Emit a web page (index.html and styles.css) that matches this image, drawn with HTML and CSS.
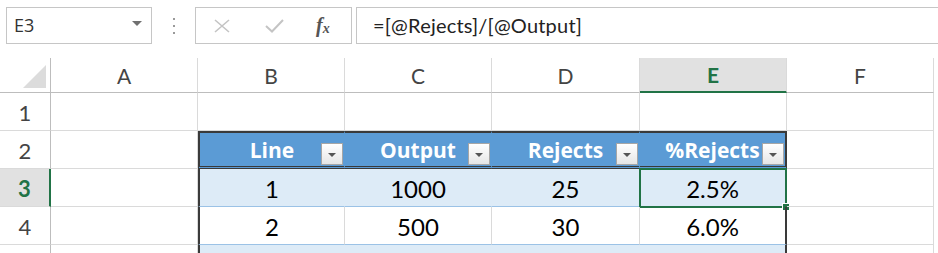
FILE: index.html
```html
<!DOCTYPE html>
<html lang="en">

<head>
    <meta charset="UTF-8">
    <title>Rejects</title>
    <link rel="stylesheet" href="styles.css">
</head>

<body>
    <div class="formula-bar">
        <div class="name-box">
            <span>E3</span>
            <span class="name-arrow"></span>
        </div>
        <div class="dots"><i></i><i></i><i></i></div>
        <div class="fx-box">
            <svg width="18" height="14" viewBox="0 0 18 14"><path d="M2 1 L16 13 M16 1 L2 13" stroke="#c4c4c4" stroke-width="1.6" fill="none"/></svg>
            <svg width="19" height="14" viewBox="0 0 19 14"><path d="M1 7 L7 12.5 L18 1" stroke="#c4c4c4" stroke-width="2" fill="none"/></svg>
            <span class="fx">f<sub>x</sub></span>
        </div>
        <div class="formula-input">=[@Rejects]/[@Output]</div>
    </div>

    <div class="sheet">
        <!-- column headers -->
        <div class="cell corner"><span class="corner-tri"></span></div>
        <div class="cell col-head">A</div>
        <div class="cell col-head">B</div>
        <div class="cell col-head">C</div>
        <div class="cell col-head">D</div>
        <div class="cell col-head active">E</div>
        <div class="cell col-head">F</div>

        <!-- row 1 -->
        <div class="cell row-head">1</div>
        <div class="cell"></div>
        <div class="cell"></div>
        <div class="cell"></div>
        <div class="cell"></div>
        <div class="cell"></div>
        <div class="cell"></div>

        <!-- row 2: table header -->
        <div class="cell row-head">2</div>
        <div class="cell"></div>
        <div class="cell th first">Line<span class="filter"></span></div>
        <div class="cell th">Output<span class="filter"></span></div>
        <div class="cell th">Rejects<span class="filter"></span></div>
        <div class="cell th last">%Rejects<span class="filter"></span></div>
        <div class="cell"></div>

        <!-- row 3 -->
        <div class="cell row-head active">3</div>
        <div class="cell"></div>
        <div class="cell td band first">1</div>
        <div class="cell td band">1000</div>
        <div class="cell td band">25</div>
        <div class="cell td band last">2.5%<span class="selection"><span class="handle"></span></span></div>
        <div class="cell"></div>

        <!-- row 4 -->
        <div class="cell row-head">4</div>
        <div class="cell"></div>
        <div class="cell td first">2</div>
        <div class="cell td">500</div>
        <div class="cell td">30</div>
        <div class="cell td last">6.0%</div>
        <div class="cell"></div>

        <!-- row 5, only its top edge is in view -->
        <div class="cell row-head"></div>
        <div class="cell"></div>
        <div class="cell td band first"></div>
        <div class="cell td band"></div>
        <div class="cell td band"></div>
        <div class="cell td band last"></div>
        <div class="cell"></div>
    </div>
</body>

</html>
```

FILE: styles.css
```css
body {
    margin: 0;
    background: #fff;
    font-family: Lato, "Open Sans", sans-serif;
    overflow: hidden;
}

/* formula bar */
.formula-bar {
    display: flex;
    align-items: flex-start;
    height: 58px;
    padding: 7px 0 0 6px;
    box-sizing: border-box;
}

.name-box {
    width: 146px;
    height: 37px;
    box-sizing: border-box;
    border: 1px solid #c6c6c6;
    display: flex;
    align-items: center;
    justify-content: space-between;
    padding: 0 9px 1px 7px;
    font-family: "Open Sans", sans-serif;
    font-size: 18px;
    color: #333;
}

.name-arrow {
    width: 0;
    height: 0;
    border-left: 5px solid transparent;
    border-right: 5px solid transparent;
    border-top: 5px solid #707070;
    margin-bottom: 4px;
}

.dots {
    width: 43px;
    height: 37px;
    display: flex;
    flex-direction: column;
    align-items: center;
    justify-content: center;
    gap: 5px;
}

.dots i {
    width: 2px;
    height: 2px;
    background: #9a9a9a;
}

.fx-box {
    width: 157px;
    height: 37px;
    box-sizing: border-box;
    border: 1px solid #c6c6c6;
    display: flex;
    align-items: center;
    padding: 0 0 0 17px;
    gap: 34px;
}

.fx {
    font-family: "Liberation Serif", serif;
    font-style: italic;
    font-weight: bold;
    font-size: 20px;
    color: #555;
    margin-left: -2px;
}

.fx sub {
    font-size: 14px;
    vertical-align: -1px;
}

.formula-input {
    flex: 1;
    height: 37px;
    margin-left: 4px;
    box-sizing: border-box;
    border: 1px solid #c6c6c6;
    border-right: none;
    display: flex;
    align-items: center;
    padding: 0 0 1px 16px;
    font-size: 20px;
    letter-spacing: 0.2px;
    color: #222;
}

/* grid */
.sheet {
    display: grid;
    grid-template-columns: 51px 147px 147px 147px 148px 147px 147px;
    grid-template-rows: 35px;
    grid-auto-rows: 38px;
}

.cell {
    position: relative;
    box-sizing: border-box;
    border-right: 1px solid #dadada;
    border-bottom: 1px solid #dadada;
    display: flex;
    align-items: center;
    justify-content: center;
    font-size: 24px;
    color: #000;
    padding-top: 2px;
}

.col-head {
    border-bottom-color: #bdbdbd;
    font-size: 21px;
    color: #444;
    padding-top: 0;
}

.row-head {
    border-right-color: #bdbdbd;
    font-size: 22px;
    color: #444;
}

.col-head.active {
    background: #e1e1e1;
    border-bottom: 2px solid #217346;
    color: #217346;
    font-weight: bold;
}

.row-head.active {
    background: #e1e1e1;
    border-right: 2px solid #217346;
    color: #217346;
    font-weight: bold;
}

.corner {
    border-bottom-color: #bdbdbd;
    border-right-color: #bdbdbd;
    align-items: flex-end;
    justify-content: flex-end;
    padding: 0 4px 4px 0;
}

.corner-tri {
    width: 23px;
    height: 23px;
    background: #dcdcdc;
    clip-path: polygon(100% 0, 100% 100%, 0 100%);
}

/* table */
.th {
    background: #5b9bd5;
    border-top: 2px solid #3a3a3a;
    border-right-color: #5b9bd5;
    border-bottom: 3px double #3a3a3a;
    color: #fff;
    font-family: "Open Sans", sans-serif;
    font-weight: bold;
    font-size: 21px;
    padding-top: 0;
    white-space: nowrap;
    overflow: hidden;
}

.td {
    border-bottom-color: #9bc2e6;
}

.band {
    background: #ddebf7;
    border-right-color: #ddebf7;
}

.first {
    border-left: 2px solid #3a3a3a;
}

.last {
    border-right: 2px solid #3a3a3a;
}

.band.last {
    border-right-color: #3a3a3a;
}

.filter {
    position: absolute;
    right: 1px;
    bottom: 1px;
    width: 22px;
    height: 22px;
    box-sizing: border-box;
    border: 1px solid #a6a6a6;
    background: linear-gradient(#ffffff, #e6e6e6);
}

.filter::after {
    content: "";
    position: absolute;
    left: 6px;
    top: 9px;
    border-left: 4px solid transparent;
    border-right: 4px solid transparent;
    border-top: 4px solid #555;
}

.selection {
    position: absolute;
    left: -1px;
    top: -1px;
    right: -2px;
    bottom: -2px;
    border: 2px solid #217346;
}

.handle {
    position: absolute;
    right: -5px;
    bottom: -5px;
    width: 6px;
    height: 6px;
    background: #217346;
    border: 1px solid #fff;
}
```
